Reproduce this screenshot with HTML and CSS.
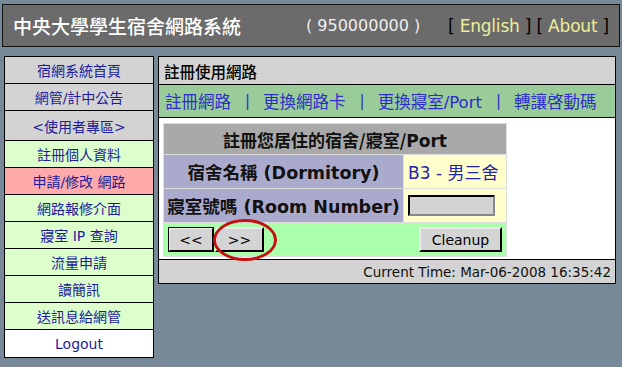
FILE: index.html
```html
<!DOCTYPE html>
<html>
<head>
<meta charset="utf-8">
<link rel="stylesheet" href="styles.css">
</head>
<body>
<div class="header">
  <span class="site-title">中央大學學生宿舍網路系統</span>
  <span class="user-id">( 950000000 )</span>
  <span class="top-links">[ <a class="hl">English</a> ] [ <a class="hl">About</a> ]</span>
</div>
<div class="content">
  <div class="sidebar">
    <div class="nav gray">宿網系統首頁</div>
    <div class="nav gray">網管/計中公告</div>
    <div class="nav gray tall">&lt;使用者專區&gt;</div>
    <div class="nav green">註冊個人資料</div>
    <div class="nav pink">申請/修改 網路</div>
    <div class="nav green">網路報修介面</div>
    <div class="nav green">寢室 IP 查詢</div>
    <div class="nav green">流量申請</div>
    <div class="nav green">讀簡訊</div>
    <div class="nav green">送訊息給網管</div>
    <div class="nav white">Logout</div>
  </div>
  <div class="main">
    <div class="main-title">註冊使用網路</div>
    <div class="tabs"><a>註冊網路</a><span class="sep">|</span><a>更換網路卡</a><span class="sep">|</span><a>更換寢室/Port</a><span class="sep">|</span><a>轉讓啓動碼</a></div>
    <div class="body">
      <table class="form">
        <tr><th colspan="2" class="form-head">註冊您居住的宿舍/寢室/<b>Port</b></th></tr>
        <tr><td class="label">宿舍名稱 (Dormitory)</td><td class="value">B3 - 男三舍</td></tr>
        <tr><td class="label">寢室號嗎 (Room Number)</td><td class="value"><span class="input"></span></td></tr>
        <tr><td colspan="2" class="actions">
          <div class="action-row">
            <span class="btn default">&lt;&lt;</span>
            <span class="btn-wrap"><span class="btn next">&gt;&gt;</span><span class="circle"></span></span>
            <span class="spacer"></span>
            <span class="btn cleanup">Cleanup</span>
          </div>
        </td></tr>
      </table>
    </div>
    <div class="status">Current Time: Mar-06-2008 16:35:42</div>
  </div>
</div>
</body>
</html>
```
FILE: styles.css
```css
html, body { margin: 0; padding: 0; }
body {
  background: #778899;
  font-family: "DejaVu Sans", Verdana, "Noto Sans CJK TC", sans-serif;
  width: 622px;
  height: 367px;
  overflow: hidden;
}
.header {
  margin: 4px 0 0 2px;
  width: 616px;
  height: 41px;
  background: #6b6b6b;
  border: 1px solid #111;
  display: flex;
  align-items: center;
}
.site-title {
  color: #fff;
  font-family: "Noto Sans CJK TC", sans-serif;
  font-size: 19px;
  font-weight: 500;
  margin-left: 10px;
  width: 293px;
}
.user-id {
  color: #eeeeee;
  font-size: 16px;
  width: 142px;
}
.top-links {
  color: #000;
  font-size: 17px;
  letter-spacing: -0.2px;
}
.hl { color: #eeee99; }
.content {
  display: flex;
  gap: 4px;
  margin: 9px 0 0 4px;
}
.sidebar {
  width: 148px;
  border: 1px solid #000;
  display: flex;
  flex-direction: column;
}
.nav {
  height: 26px;
  border-top: 1px solid #000;
  display: flex;
  align-items: center;
  justify-content: center;
  font-size: 14px;
  color: #1c1c9c;
  font-family: "DejaVu Sans", "Noto Sans CJK TC", sans-serif;
}
.nav:first-child { border-top: none; }
.nav.tall { height: 29px; }
.gray { background: #d3d3d3; }
.green { background: #ddffcc; }
.pink { background: #ffaaaa; }
.white { background: #ffffff; height: 27px; }
.main {
  width: 456px;
  height: 226px;
  border: 1px solid #000;
  background: #fff;
  display: flex;
  flex-direction: column;
}
.main-title {
  height: 27px;
  background: #d3d3d3;
  border-bottom: 1px solid #000;
  font-size: 15.5px;
  color: #000;
  font-family: "Noto Sans CJK TC", sans-serif;
  font-weight: 500;
  display: flex;
  align-items: center;
  padding-left: 5px;
}
.tabs {
  height: 32px;
  background: #99cc99;
  display: flex;
  align-items: center;
  padding-left: 6px;
  font-size: 16.5px;
  color: #2d2dcc;
  font-family: "DejaVu Sans", "Noto Sans CJK TC", sans-serif;
}
.tabs a { color: #2d2dcc; }
.sep { margin: 0 13px 0 14px; color: #2d2dcc; font-size: 15px; }
.body {
  flex: 1;
  border-top: 1px solid #000;
  padding: 5px 0 0 4px;
}
.form {
  border-collapse: collapse;
  border: 1px solid #444;
  width: 344px;
}
.form td, .form th {
  padding: 0;
  border: 1px solid #dddddd;
}
.form-head {
  height: 30px;
  background: #a9a9a9;
  font-size: 17px;
  font-weight: bold;
  color: #111;
  font-family: "Noto Sans CJK TC", sans-serif;
  text-align: center;
}
.form-head b { font-family: "DejaVu Sans", sans-serif; }
.label {
  height: 33px;
  width: 239px;
  background: #aaaacc;
  font-size: 17.5px;
  font-weight: bold;
  color: #111;
  text-align: center;
  white-space: nowrap;
  font-family: "DejaVu Sans", "Noto Sans CJK TC", sans-serif;
}
.value {
  background: #ffffcc;
  font-size: 17px;
  color: #2222aa;
  padding-left: 4px !important;
  white-space: nowrap;
  font-family: "DejaVu Sans", "Noto Sans CJK TC", sans-serif;
}
.input {
  display: block;
  width: 83px;
  height: 17px;
  background: #d3d3d3;
  border: 2px inset #888;
  border-top-color: #222;
  border-left-color: #222;
}
.actions {
  height: 33px;
  background: #aaffaa;
}
.action-row {
  display: flex;
  align-items: center;
  padding: 0 4px;
}
.btn {
  display: flex;
  align-items: center;
  justify-content: center;
  height: 21px;
  background: #d4d4d4;
  border: 2px outset #eee;
  border-right-color: #333;
  border-bottom-color: #333;
  font-size: 14px;
  color: #000;
}
.btn.default { width: 42px; outline: 1px solid #000; outline-offset: -1px; }
.btn.next { width: 45px; }
.btn.cleanup { width: 79px; }
.btn-wrap { position: relative; margin-left: 1px; }
.circle {
  position: absolute;
  left: -2px;
  top: -8px;
  width: 58px;
  height: 36px;
  border: 3px solid #c41010;
  border-radius: 50%;
}
.spacer { flex: 1; }
.status {
  height: 23px;
  background: #d3d3d3;
  border-top: 1px solid #000;
  font-size: 13.5px;
  color: #111;
  display: flex;
  align-items: center;
  justify-content: flex-end;
  padding-right: 4px;
}
```
